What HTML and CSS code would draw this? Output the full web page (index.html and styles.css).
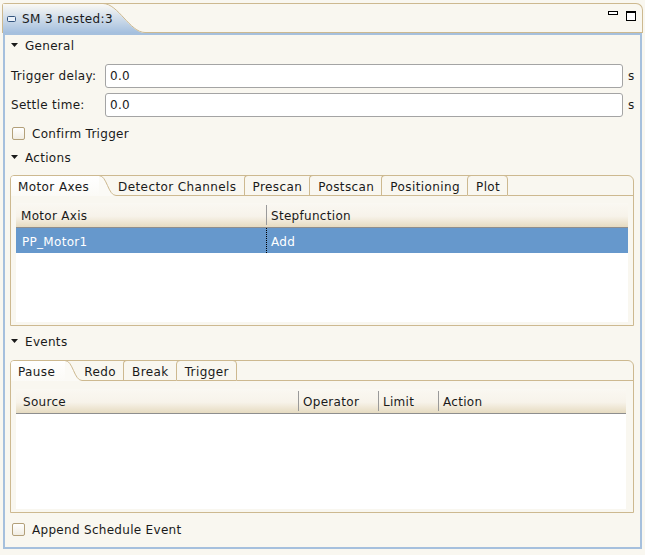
FILE: index.html
```html
<!DOCTYPE html>
<html>
<head>
<meta charset="utf-8">
<title>SM 3 nested:3</title>
<link rel="stylesheet" href="styles.css">
</head>
<body>
<div class="view">
  <div class="view-head">
    <div class="view-tab">
      <svg class="view-tab-bg" width="142" height="29" viewBox="0 0 142 29">
        <defs>
          <linearGradient id="vtg" x1="0" y1="0" x2="0" y2="29" gradientUnits="userSpaceOnUse">
            <stop offset="0" stop-color="#faf9f5"/>
            <stop offset="1" stop-color="#a4bfde"/>
          </linearGradient>
        </defs>
        <path d="M0,29 L0,0 L100,0 C115,0 127,29 142,29 Z" fill="url(#vtg)"/>
        <path d="M100,-0.5 C115,-0.5 127,28.5 142,28.5" fill="none" stroke="#cdb990"/>
      </svg>
      <svg class="view-icon" width="9" height="6" viewBox="0 0 9 6"><rect x="0.5" y="0.5" width="8" height="5" rx="1" fill="#eaf1f9" stroke="#34557e"/></svg>
      <span class="view-title">SM 3 nested:3</span>
    </div>
    <div class="view-head-rest">
      <svg class="win-icon" width="10" height="4" viewBox="0 0 10 4"><rect x="0.5" y="0.5" width="9" height="3" fill="#fff" stroke="#000"/></svg>
      <svg class="win-icon" width="10" height="10" viewBox="0 0 10 10"><rect x="0.5" y="0.5" width="9" height="9" fill="#fff" stroke="#000"/><rect x="0" y="0" width="10" height="2" fill="#000"/></svg>
    </div>
  </div>

  <div class="view-body">
    <div class="section">
      <svg class="arrow" width="7" height="4" viewBox="0 0 7 4"><path d="M0,0 H7 L3.5,4 Z"/></svg>
      <span class="txt">General</span>
    </div>

    <div class="field field-first">
      <span class="field-label">Trigger delay:</span>
      <span class="input">0.0</span>
      <span class="unit">s</span>
    </div>
    <div class="field">
      <span class="field-label">Settle time:</span>
      <span class="input">0.0</span>
      <span class="unit">s</span>
    </div>

    <div class="check-row check-confirm">
      <span class="checkbox"></span>
      <span class="txt">Confirm Trigger</span>
    </div>

    <div class="section section-gap">
      <svg class="arrow" width="7" height="4" viewBox="0 0 7 4"><path d="M0,0 H7 L3.5,4 Z"/></svg>
      <span class="txt">Actions</span>
    </div>

    <div class="folder folder-actions">
      <div class="tabs">
        <div class="tab tab-sel">Motor Axes</div>
        <svg class="tab-curve" width="17" height="20" viewBox="0 0 17 20">
          <path class="curve-fill" d="M0,0 C8,0 9,19.5 17,19.5 L17,20 L0,20 Z"/>
          <path class="curve-line" d="M0,-0.5 C8,-0.5 9,19.5 17,19.5"/>
        </svg>
        <div class="tab tab-first">Detector Channels</div>
        <div class="tab tab-sep">Prescan</div>
        <div class="tab tab-sep">Postscan</div>
        <div class="tab tab-sep">Positioning</div>
        <div class="tab tab-sep tab-last">Plot</div>
        <div class="tab-fill"></div>
      </div>
      <div class="folder-body">
        <div class="table">
          <div class="thead">
            <div class="th col-axis"><span class="txt">Motor Axis</span></div>
            <div class="th col-rest"><span class="txt">Stepfunction</span></div>
          </div>
          <div class="tr tr-sel">
            <div class="td col-axis"><span class="txt">PP_Motor1</span></div>
            <div class="td col-rest td-dotted"><span class="txt">Add</span></div>
          </div>
        </div>
      </div>
    </div>

    <div class="section section-gap">
      <svg class="arrow" width="7" height="4" viewBox="0 0 7 4"><path d="M0,0 H7 L3.5,4 Z"/></svg>
      <span class="txt">Events</span>
    </div>

    <div class="folder folder-events">
      <div class="tabs">
        <div class="tab tab-sel">Pause</div>
        <svg class="tab-curve" width="17" height="20" viewBox="0 0 17 20">
          <path class="curve-fill" d="M0,0 C8,0 9,19.5 17,19.5 L17,20 L0,20 Z"/>
          <path class="curve-line" d="M0,-0.5 C8,-0.5 9,19.5 17,19.5"/>
        </svg>
        <div class="tab tab-first">Redo</div>
        <div class="tab tab-sep">Break</div>
        <div class="tab tab-sep tab-last">Trigger</div>
        <div class="tab-fill"></div>
      </div>
      <div class="folder-body folder-body-events">
        <div class="table table-events">
          <div class="thead">
            <div class="th col-source"><span class="txt">Source</span></div>
            <div class="th col-operator"><span class="txt">Operator</span></div>
            <div class="th col-limit"><span class="txt">Limit</span></div>
            <div class="th col-rest"><span class="txt">Action</span></div>
          </div>
        </div>
      </div>
    </div>

    <div class="check-row check-append">
      <span class="checkbox"></span>
      <span class="txt">Append Schedule Event</span>
    </div>
  </div>
</div>
</body>
</html>
```

FILE: styles.css
```css
* {
  box-sizing: border-box;
}

html,
body {
  margin: 0;
}

body {
  width: 645px;
  height: 555px;
  overflow: hidden;
  padding: 3px 0 0 2px;
  background: #f9f7f0;
  color: #1a1a1a;
  font-family: "DejaVu Sans", "Noto Sans", sans-serif;
  font-size: 12px;
  line-height: 14px;
  letter-spacing: 0.3px;
}

/* text nudged one pixel lower inside centred rows */
.txt {
  padding-top: 2px;
  white-space: nowrap;
}

/* ---------- view header ---------- */
.view {
  width: 641px;
}

.view-head {
  display: flex;
  height: 30px;
  border-top: 1px solid #cdb990;
  border-left: 1px solid #cdb990;
  border-right: 1px solid #cdb990;
  border-radius: 3px 7px 0 0;
}

.view-tab {
  position: relative;
  display: flex;
  align-items: center;
  flex: none;
  width: 142px;
  height: 29px;
  padding-left: 4px;
}

.view-tab-bg {
  position: absolute;
  left: 0;
  top: 0;
  display: block;
}

.view-icon {
  position: relative;
  display: block;
  margin-right: 6px;
  margin-top: 1px;
}

.view-title {
  position: relative;
  white-space: nowrap;
  letter-spacing: 0.4px;
}

.view-head-rest {
  flex: 1;
  display: flex;
  justify-content: flex-end;
  align-items: flex-start;
  gap: 8px;
  padding: 7px 6px 0 0;
  border-bottom: 1px solid #cdb990;
}

.win-icon {
  display: block;
}

/* ---------- view body ---------- */
.view-body {
  margin: 0 1px;
  height: 516px;
  border: 2px solid #a6c0dd;
  background: #f9f7f0;
}

.section {
  display: flex;
  align-items: center;
  height: 20px;
  padding-left: 6px;
}

.section-gap {
  margin-top: 5px;
}

.arrow {
  display: block;
  margin-right: 7px;
  fill: #1a1a1a;
}

.field {
  display: flex;
  align-items: center;
  height: 24px;
  margin-top: 5px;
  padding-right: 6px;
}

.field-first {
  margin-top: 9px;
}

.field-label {
  flex: none;
  width: 100px;
  padding-left: 6px;
  white-space: nowrap;
}

.input {
  flex: 1;
  display: flex;
  align-items: center;
  height: 24px;
  padding-left: 4px;
  border: 1px solid #a4a4a4;
  border-radius: 3px;
  background: #ffffff;
}

.unit {
  flex: none;
  width: 11px;
  padding-left: 5px;
}

.check-row {
  display: flex;
  align-items: center;
  height: 18px;
  margin-top: 7px;
  padding-left: 7px;
}

.checkbox {
  flex: none;
  width: 13px;
  height: 13px;
  margin-right: 7px;
  border: 1px solid #b3a07a;
  border-radius: 2px;
  background: linear-gradient(#ffffff, #f1ede3);
}

/* ---------- tab folders ---------- */
.folder {
  margin: 8px 6px 0 5px;
  border: 1px solid #cdb990;
  border-radius: 4px 6px 0 0;
}

.folder-events {
  margin-top: 9px;
}

.tabs {
  display: flex;
  align-items: flex-start;
  height: 20px;
}

.tab {
  display: flex;
  align-items: center;
  flex: none;
  height: 20px;
  padding: 2px 7px 0 8px;
  border-bottom: 1px solid #cdb990;
  white-space: nowrap;
  letter-spacing: 0.4px;
}

.tab-sel {
  padding: 2px 10px 0 7px;
  border-bottom: none;
  border-top-left-radius: 3px;
  background: linear-gradient(#ffffff, #fbfaf6);
}

.tab-curve {
  display: block;
  flex: none;
}

.curve-fill {
  fill: #fbfaf6;
}

.curve-line {
  fill: none;
  stroke: #cdb990;
}

.tab-first {
  padding-left: 2px;
}

.tab-sep {
  height: 21px;
  margin-top: -1px;
  padding-top: 3px;
  border-top: 1px solid #cdb990;
  border-left: 1px solid #cdb990;
  border-top-left-radius: 4px;
}

.tab-last {
  border-right: 1px solid #cdb990;
  border-top-right-radius: 4px;
}

.tab-fill {
  flex: 1;
  height: 20px;
  border-bottom: 1px solid #cdb990;
}

.folder-body {
  height: 129px;
  padding: 7px 5px 3px 5px;
}

.folder-body-events {
  height: 131px;
  padding: 8px 7px 3px 5px;
}

/* ---------- tables ---------- */
.table {
  display: flex;
  flex-direction: column;
  height: 100%;
  background: #ffffff;
}

.thead {
  display: flex;
  align-items: center;
  flex: none;
  height: 25px;
  border-bottom: 1px solid #8e8e8e;
  background: linear-gradient(#faf8f2 0%, #f7f3ea 55%, #e6dbc1 100%);
}

.th {
  display: flex;
  align-items: center;
  flex: none;
  height: 100%;
  padding-left: 5px;
  white-space: nowrap;
}

.th + .th {
  padding-left: 0;
}

.th + .th::before {
  content: "";
  display: block;
  width: 1px;
  height: 20px;
  margin-right: 4px;
  background: #9a9a9a;
}

.col-axis {
  width: 250px;
}

.col-source {
  width: 282px;
  padding-left: 7px;
}

.col-operator {
  width: 80px;
}

.col-limit {
  width: 60px;
}

.col-rest {
  flex: 1;
}

.tr {
  display: flex;
  height: 25px;
}

.tr-sel {
  background: #6698cc;
  color: #ffffff;
}

.td {
  display: flex;
  align-items: center;
  flex: none;
  padding-left: 6px;
  white-space: nowrap;
}

.td-dotted {
  padding-left: 4px;
  border-left: 1px dotted #000000;
}
```
